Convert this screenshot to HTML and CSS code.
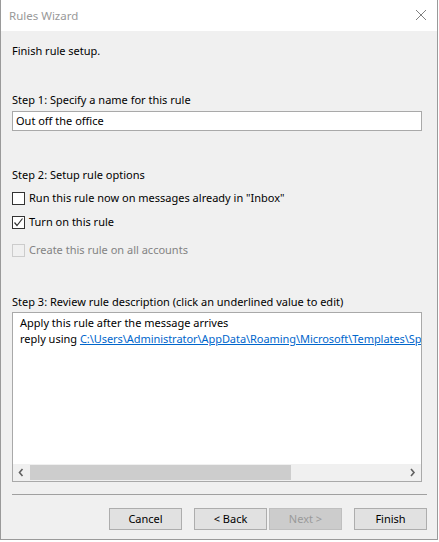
FILE: index.html
```html
<!DOCTYPE html>
<html>
<head>
<meta charset="utf-8">
<link rel="stylesheet" href="styles.css">
</head>
<body>
<div class="window">
  <div class="titlebar">
    <span class="title">Rules Wizard</span>
    <svg class="close" width="12" height="12" viewBox="0 0 12 12"><path d="M1 1 L11 11 M11 1 L1 11" stroke="#808080" stroke-width="1" fill="none"/></svg>
  </div>
  <div class="content">
    <div class="intro">Finish rule setup.</div>
    <div class="label step1">Step 1: Specify a name for this rule</div>
    <div class="input">Out off the office</div>
    <div class="label step2">Step 2: Setup rule options</div>
    <div class="check-row">
      <span class="box"></span><span>Run this rule now on messages already in "Inbox"</span>
    </div>
    <div class="check-row">
      <span class="box"><svg width="11" height="11" viewBox="0 0 11 11"><path d="M1.5 5.5 L4 8.5 L9.5 1.5" stroke="#333" stroke-width="1.2" fill="none"/></svg></span><span>Turn on this rule</span>
    </div>
    <div class="check-row disabled">
      <span class="box"></span><span>Create this rule on all accounts</span>
    </div>
    <div class="label step3">Step 3: Review rule description (click an underlined value to edit)</div>
    <div class="desc">
      <div class="desc-text">
        <div>Apply this rule after the message arrives</div>
        <div>reply using <span class="link">C:\Users\Administrator\AppData\Roaming\Microsoft\Templates\Sp</span></div>
      </div>
      <div class="hscroll">
        <svg class="arrow" width="17" height="15" viewBox="0 0 17 15"><path d="M9.5 4 L6.5 7.5 L9.5 11" stroke="#606060" stroke-width="1.6" fill="none"/></svg>
        <div class="track"><div class="thumb"></div></div>
        <svg class="arrow" width="17" height="15" viewBox="0 0 17 15"><path d="M7 4 L10 7.5 L7 11" stroke="#606060" stroke-width="1.6" fill="none"/></svg>
      </div>
    </div>
    <div class="sep"></div>
    <div class="buttons">
      <div class="btn">Cancel</div>
      <div class="pair">
        <div class="btn">&lt; Back</div>
        <div class="btn off">Next &gt;</div>
      </div>
      <div class="btn">Finish</div>
    </div>
  </div>
</div>
</body>
</html>
```
FILE: styles.css
```css
html, body {
  margin: 0;
  padding: 0;
  background: #ffffff;
}
body {
  font-family: "Noto Sans", "Open Sans", sans-serif;
  font-size: 11px;
  color: #000;
}
.window {
  width: 436px;
  height: 539px;
  border: 1px solid #9a9a9a;
  border-top: none;
  background: #f0f0f0;
  display: flex;
  flex-direction: column;
}
.titlebar {
  height: 31px;
  background: #fff;
  display: flex;
  align-items: center;
  justify-content: space-between;
  padding: 0 10px 0 8px;
}
.title {
  color: #999;
  font-size: 11.5px;
  margin-top: -1px;
}
.close {
  margin-top: -1px;
}
.content {
  padding: 0 10px 0 11px;
  display: flex;
  flex-direction: column;
}
.intro {
  margin-top: 12px;
  line-height: 16px;
}
.label {
  line-height: 16px;
}
.step1 { margin-top: 33px; }
.input {
  margin-top: 3px;
  width: 405px;
  height: 18px;
  border: 1px solid #a9a9a9;
  background: #fff;
  line-height: 18px;
  padding-left: 3px;
}
.step2 { margin-top: 36px; }
.check-row {
  display: flex;
  align-items: center;
  gap: 4px;
  height: 16px;
  line-height: 16px;
  margin-top: 7px;
}
.check-row + .check-row { margin-top: 8px; }
.check-row.disabled { margin-top: 12px; color: #838383; }
.box {
  width: 11px;
  height: 11px;
  border: 1px solid #333;
  background: #fff;
  display: flex;
  align-items: center;
  justify-content: center;
  flex: none;
}
.disabled .box {
  border-color: #cccccc;
  background: #f0f0f0;
}
.step3 { margin-top: 36px; }
.desc {
  margin-top: 2px;
  width: 408px;
  height: 168px;
  border: 1px solid #a9a9a9;
  background: #fff;
  display: flex;
  flex-direction: column;
  overflow: hidden;
}
.desc-text {
  flex: 1;
  padding: 2px 0 0 7px;
  line-height: 16px;
  white-space: nowrap;
  overflow: hidden;
}
.link {
  color: #0066cc;
  text-decoration: underline;
  letter-spacing: -0.06px;
}
.hscroll {
  height: 17px;
  background: #f0f0f0;
  display: flex;
  align-items: center;
}
.arrow { flex: none; }
.track {
  flex: 1;
  height: 15px;
}
.thumb {
  width: 261px;
  height: 15px;
  background: #cdcdcd;
}
.sep {
  margin-top: 12px;
  width: 415px;
  height: 1px;
  background: #a0a0a0;
}
.buttons {
  margin-top: 13px;
  display: flex;
  justify-content: flex-end;
  gap: 12px;
  width: 415px;
}
.pair {
  display: flex;
  gap: 2px;
}
.btn {
  width: 71px;
  height: 20px;
  border: 1px solid #adadad;
  background: #e1e1e1;
  text-align: center;
  line-height: 20px;
}
.btn.off {
  background: #cccccc;
  border-color: #bfbfbf;
  color: #9a9a9a;
}
```
